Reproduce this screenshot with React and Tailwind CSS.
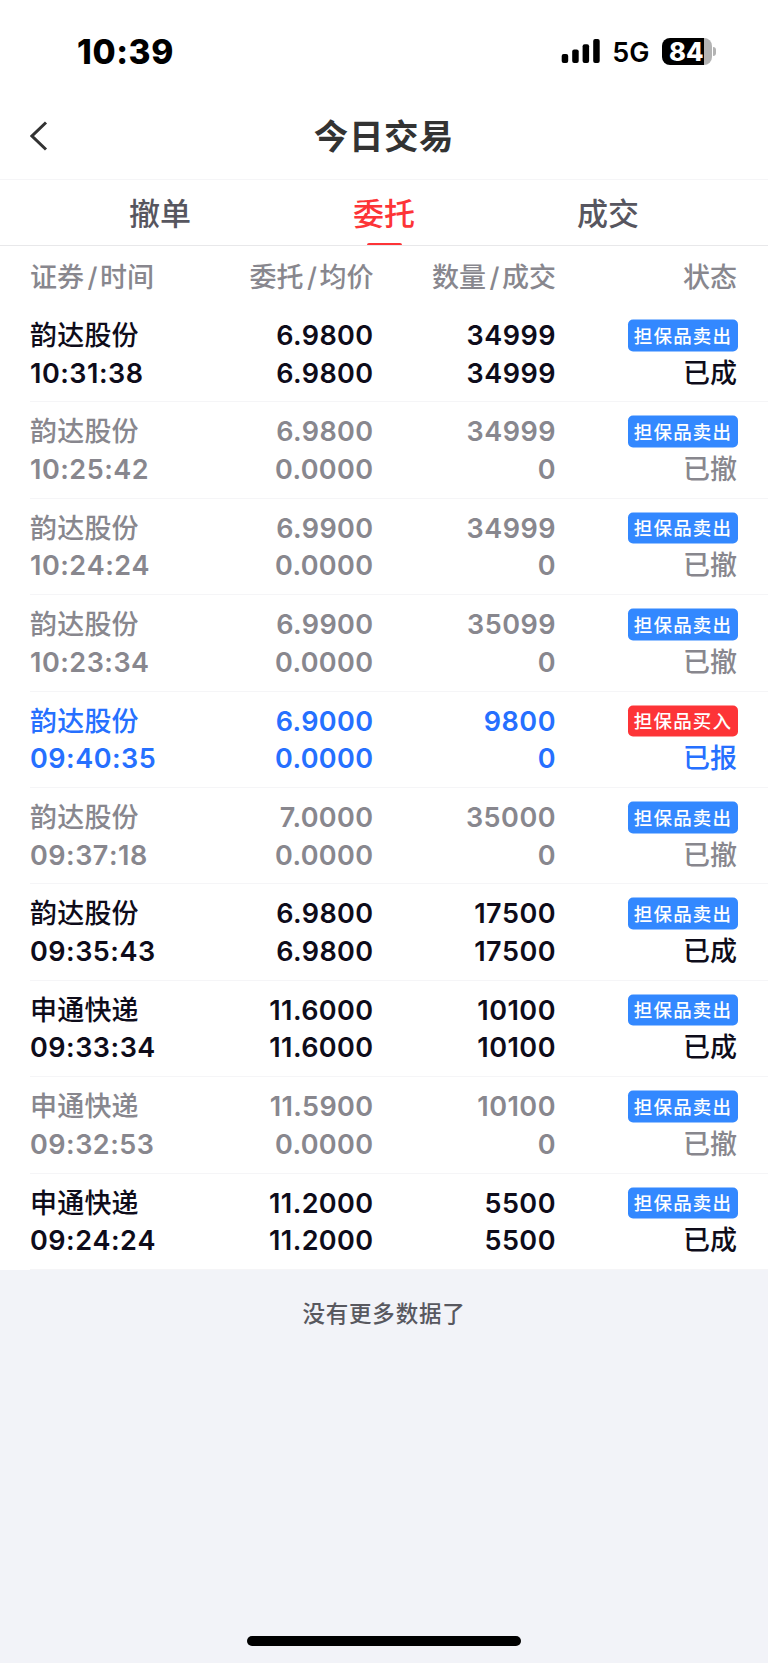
const ORDERS = [
  { name: "韵达股份", time: "10:31:38", price: "6.9800", avg: "6.9800", qty: "34999", filled: "34999", side: "sell", status: "已成" },
  { name: "韵达股份", time: "10:25:42", price: "6.9800", avg: "0.0000", qty: "34999", filled: "0", side: "sell", status: "已撤" },
  { name: "韵达股份", time: "10:24:24", price: "6.9900", avg: "0.0000", qty: "34999", filled: "0", side: "sell", status: "已撤" },
  { name: "韵达股份", time: "10:23:34", price: "6.9900", avg: "0.0000", qty: "35099", filled: "0", side: "sell", status: "已撤" },
  { name: "韵达股份", time: "09:40:35", price: "6.9000", avg: "0.0000", qty: "9800", filled: "0", side: "buy", status: "已报" },
  { name: "韵达股份", time: "09:37:18", price: "7.0000", avg: "0.0000", qty: "35000", filled: "0", side: "sell", status: "已撤" },
  { name: "韵达股份", time: "09:35:43", price: "6.9800", avg: "6.9800", qty: "17500", filled: "17500", side: "sell", status: "已成" },
  { name: "申通快递", time: "09:33:34", price: "11.6000", avg: "11.6000", qty: "10100", filled: "10100", side: "sell", status: "已成" },
  { name: "申通快递", time: "09:32:53", price: "11.5900", avg: "0.0000", qty: "10100", filled: "0", side: "sell", status: "已撤" },
  { name: "申通快递", time: "09:24:24", price: "11.2000", avg: "11.2000", qty: "5500", filled: "5500", side: "sell", status: "已成" },
];

const TONES = { 已成: "text-[#0e0c1a]", 已撤: "text-[#88878e]", 已报: "text-[#2670ff]" };

const SIDES = {
  sell: { label: "担保品卖出", bg: "bg-[#3388ff]" },
  buy: { label: "担保品买入", bg: "bg-[#fd3437]" },
};

const COLS = "grid grid-cols-[163px_180.5px_182.5px_182px]";

function StatusBar() {
  return (
    <div className="flex h-[92px] items-start justify-between pl-[77px] pr-[52px] pt-[31px]">
      <span className="text-[33.5px] font-extrabold leading-[42px] tracking-[0.6px] text-black">10:39</span>
      <div className="flex h-10 items-center">
        <svg width="40" height="26" viewBox="0 0 40 26" className="mr-[11px]">
          <rect x="0.7" y="16" width="6.5" height="9" rx="2" />
          <rect x="11.2" y="11.5" width="6.5" height="13.5" rx="2" />
          <rect x="21.6" y="6.3" width="6.5" height="18.7" rx="2" />
          <rect x="32.2" y="1" width="6.5" height="24" rx="2" />
        </svg>
        <span className="mr-3 mt-[3px] text-[27px] font-semibold leading-8 text-black">5G</span>
        <div className="flex h-[27px] w-[50px] items-center rounded-lg bg-[linear-gradient(90deg,#000_84%,#b3b3b3_84%)]">
          <span className="pl-[7.5px] text-[25.5px] font-extrabold leading-[27px] text-white">84</span>
        </div>
        <i className="ml-[1.5px] h-[9px] w-[3px] rounded-r-full bg-[#b3b3b3]" />
      </div>
    </div>
  );
}

function Head({ a, b }) {
  return (
    <span>
      {a}
      <span className="ml-[3.5px] mr-[2.5px]">/</span>
      {b}
    </span>
  );
}

function Order({ o }) {
  const side = SIDES[o.side];
  return (
    <div className={`${COLS} ml-[30px] h-[96.4px] border-b border-[#f5f5f7] pt-[11px] leading-[37.6px] ${TONES[o.status]}`}>
      <div className="flex flex-col whitespace-nowrap">
        <span className="tracking-[0.2px]">{o.name}</span>
        <span className="font-[560] tracking-[0.5px] [font-kerning:none]">{o.time}</span>
      </div>
      <div className="flex flex-col text-right font-[560] tracking-[0.4px]">
        <span>{o.price}</span>
        <span>{o.avg}</span>
      </div>
      <div className="flex flex-col text-right font-[560] tracking-[0.5px]">
        <span>{o.qty}</span>
        <span>{o.filled}</span>
      </div>
      <div className="flex flex-col items-end">
        <span className="flex h-[37.6px] items-center">
          <span className={`${side.bg} flex h-[31.5px] w-[110px] -translate-y-[0.5px] items-center justify-center rounded-[5px] text-[18.5px] leading-none tracking-[1.2px] text-white`}>
            {side.label}
          </span>
        </span>
        <span className="pr-px">{o.status}</span>
      </div>
    </div>
  );
}

export default function App() {
  return (
    <div className="flex min-h-[1663px] w-[768px] flex-col bg-[#f2f3f8] font-['Inter','Noto_Sans_CJK_SC',sans-serif] text-[27px] font-medium">
      <div className="bg-white">
        <StatusBar />
        <header className="grid h-[88px] grid-cols-[1fr_auto_1fr] items-center border-b border-[#f5f5f7] px-[30px] text-[#333]">
          <svg width="18" height="30" viewBox="0 0 18 30" fill="none" stroke="currentColor" strokeWidth="3">
            <path d="M16 1.5 2 15l14 13.5" />
          </svg>
          <h1 className="pt-0.5 text-[34.5px] font-bold tracking-[0.6px]">今日交易</h1>
        </header>
        <nav className="flex h-[66px] border-b border-[#e8e8ea] px-12 pt-[3px] text-[31px] text-[#57565f]">
          <span className="flex flex-1 items-center justify-center">撤单</span>
          <span className="relative flex flex-1 items-center justify-center text-[#fd3437]">
            委托
            <i className="absolute bottom-0 h-[2.5px] w-[35px] rounded-t-sm bg-[#fd3437]" />
          </span>
          <span className="flex flex-1 items-center justify-center">成交</span>
        </nav>
        <div className={`${COLS} ml-[30px] h-[60px] whitespace-nowrap pt-3 leading-10 text-[#88878e]`}>
          <Head a="证券" b="时间" />
          <div className="text-right"><Head a="委托" b="均价" /></div>
          <div className="text-right"><Head a="数量" b="成交" /></div>
          <div className="pr-px text-right">状态</div>
        </div>
        {ORDERS.map((o) => <Order key={o.time} o={o} />)}
      </div>
      <p className="pt-[26px] text-center text-[22.5px] leading-9 tracking-[0.8px] text-[#58585f]">没有更多数据了</p>
      <div className="mx-auto mb-[17px] mt-auto h-[10px] w-[274px] rounded-full bg-black" />
    </div>
  );
}
